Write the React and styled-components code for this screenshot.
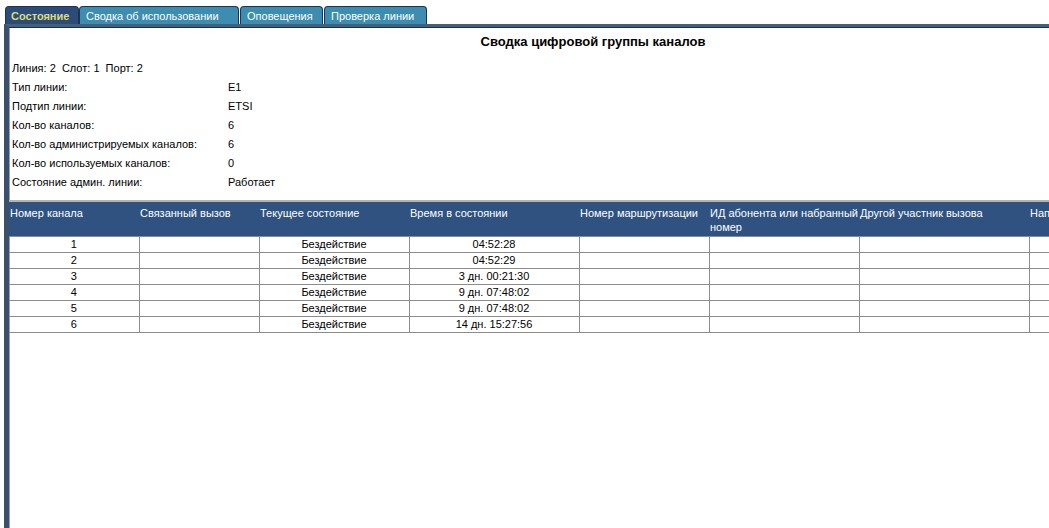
import React from "react";
import { styled, createGlobalStyle } from "styled-components";

const GlobalStyle = createGlobalStyle`
  html, body {
    margin: 0;
    padding: 0;
    background: #ffffff;
    overflow: hidden;
  }
  body {
    font-family: "Liberation Sans", Arial, sans-serif;
    font-size: 11px;
    color: #000;
  }
`;

const Page = styled.div`
  width: 1200px;
  height: 528px;
  padding: 5px 0 0 4px;
  box-sizing: border-box;
  display: flex;
  flex-direction: column;
`;

const TabBar = styled.div`
  display: flex;
  align-items: flex-end;
  height: 19px;
  padding-left: 1px;
`;

const Tab = styled.div`
  height: 18px;
  box-sizing: border-box;
  padding: 0 ${(p) => (p.$active ? 5 : 6)}px;
  margin-right: ${(p) => p.$gap || 0}px;
  width: ${(p) => p.$w}px;
  display: flex;
  align-items: center;
  border: 1px solid #1c3454;
  border-bottom: none;
  border-radius: 4px 4px 0 0;
  background: ${(p) => (p.$active ? "#2c4c78" : "#3c8db0")};
  color: ${(p) => (p.$active ? "#dcdc7a" : "#ffffff")};
  font-weight: ${(p) => (p.$active ? "bold" : "normal")};
  font-size: 11px;
  white-space: nowrap;
`;

const Frame = styled.div`
  flex: 1;
  background: #ffffff;
  border-top: 3px solid #44607f;
  border-left: 5px solid #3a506c;
  box-shadow: inset 0 1px 0 #1d2c40, inset 1px 0 0 #9aa3ad;
`;

const Title = styled.div`
  width: 1168px;
  text-align: center;
  font-weight: bold;
  font-size: 13px;
  padding-top: 7px;
  height: 22px;
`;

const Info = styled.div`
  padding: 2px 0 9px 3px;
`;

const InfoLine = styled.div`
  display: flex;
  height: 19px;
  align-items: center;
`;

const Label = styled.span`
  width: 216px;
`;

const Table = styled.table`
  border-collapse: collapse;
  table-layout: fixed;
  width: 1150px;
  border-top: 2px solid #b4b4b4;
`;

const Th = styled.th`
  background: #2f5281;
  color: #ffffff;
  font-weight: normal;
  text-align: left;
  vertical-align: top;
  padding: 4px 0 2px 1px;
  height: 25px;
  line-height: 14px;
  white-space: nowrap;
`;

const Row = styled.tr`
  height: 16px;
`;

const Td = styled.td`
  padding: 0 2px;
  border: 1px solid #8c8c8c;
  text-align: center;
  line-height: 13px;
  white-space: nowrap;
  overflow: hidden;
  &:first-child {
    border-left: none;
  }
`;

const columns = [
  { title: ["Номер канала"], w: 130 },
  { title: ["Связанный вызов"], w: 120 },
  { title: ["Текущее состояние"], w: 150 },
  { title: ["Время в состоянии"], w: 170 },
  { title: ["Номер маршрутизации"], w: 130 },
  { title: ["ИД абонента или набранный", "номер"], w: 150 },
  { title: ["Другой участник вызова"], w: 170 },
  { title: ["Направление"], w: 130 },
];

const info = [
  ["Тип линии:", "E1"],
  ["Подтип линии:", "ETSI"],
  ["Кол-во каналов:", "6"],
  ["Кол-во администрируемых каналов:", "6"],
  ["Кол-во используемых каналов:", "0"],
  ["Состояние админ. линии:", "Работает"],
];

const rows = [
  ["1", "04:52:28"],
  ["2", "04:52:29"],
  ["3", "3 дн. 00:21:30"],
  ["4", "9 дн. 07:48:02"],
  ["5", "9 дн. 07:48:02"],
  ["6", "14 дн. 15:27:56"],
];

export default function App() {
  return (
    <>
      <GlobalStyle />
      <Page>
        <TabBar>
          <Tab $active $w={74}>Состояние</Tab>
          <Tab $w={160} $gap={1}>Сводка об использовании</Tab>
          <Tab $w={83} $gap={1}>Оповещения</Tab>
          <Tab $w={103}>Проверка линии</Tab>
        </TabBar>
        <Frame>
          <Title>Сводка цифровой группы каналов</Title>
          <Info>
            <InfoLine>Линия: 2&nbsp; Слот: 1&nbsp; Порт: 2</InfoLine>
            {info.map(([k, v]) => (
              <InfoLine key={k}>
                <Label>{k}</Label>
                <span>{v}</span>
              </InfoLine>
            ))}
          </Info>
          <Table>
            <colgroup>
              {columns.map((c) => (
                <col key={c.title[0]} style={{ width: c.w }} />
              ))}
            </colgroup>
            <thead>
              <tr>
                {columns.map((c) => (
                  <Th key={c.title[0]}>
                    {c.title.map((line, i) => (
                      <div key={i}>{line}</div>
                    ))}
                  </Th>
                ))}
              </tr>
            </thead>
            <tbody>
              {rows.map(([n, t]) => (
                <Row key={n}>
                  <Td>{n}</Td>
                  <Td></Td>
                  <Td>Бездействие</Td>
                  <Td>{t}</Td>
                  <Td></Td>
                  <Td></Td>
                  <Td></Td>
                  <Td></Td>
                </Row>
              ))}
            </tbody>
          </Table>
        </Frame>
      </Page>
    </>
  );
}
